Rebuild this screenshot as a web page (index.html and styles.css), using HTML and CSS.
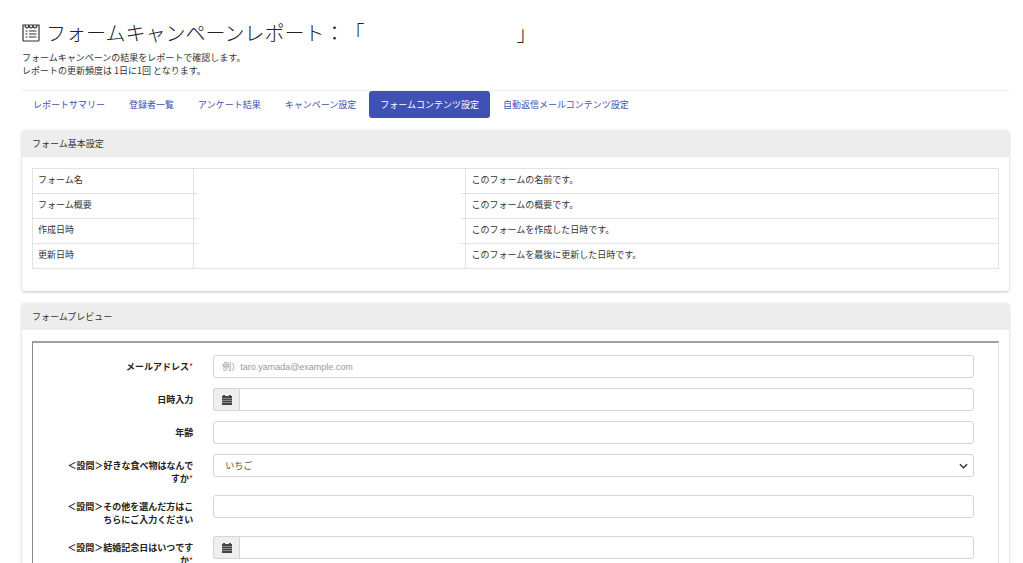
FILE: index.html
```html
<!DOCTYPE html>
<html lang="ja">
<head>
<meta charset="utf-8">
<meta name="viewport" content="width=device-width, initial-scale=1">
<title>フォームキャンペーンレポート</title>
<link rel="stylesheet" href="styles.css">
</head>
<body>
<main class="page">
  <header class="page-header">
    <h1 class="page-title">
      <svg class="title-icon" viewBox="0 0 18 18" aria-hidden="true">
        <path d="M1 1h16v15q0 1-1 1H2q-1 0-1-1z"/>
        <path d="M3 1q.3 3 2 3T7 1q.3 3 2 3T11 1q.3 3 2 3T15 1"/>
        <path d="M3.500 7h2M3.500 10h2M3.500 13h2M7 7h7.500M7 10h7.500M7 13h7.500"/>
      </svg>
      <span>フォームキャンペーンレポート：「<span class="title-name"></span>」</span>
    </h1>
    <p class="lead">フォームキャンペーンの結果をレポートで確認します。<br>レポートの更新頻度は 1日に1回 となります。</p>
  </header>

  <nav class="tabs">
    <a class="tab" href="#">レポートサマリー</a>
    <a class="tab" href="#">登録者一覧</a>
    <a class="tab" href="#">アンケート結果</a>
    <a class="tab" href="#">キャンペーン設定</a>
    <a class="tab tab-active" href="#" aria-current="page">フォームコンテンツ設定</a>
    <a class="tab" href="#">自動返信メールコンテンツ設定</a>
  </nav>

  <section class="card">
    <h2 class="card-title">フォーム基本設定</h2>
    <div class="card-body card-body-settings">
      <table class="settings">
        <colgroup><col class="col-name"><col class="col-value"><col></colgroup>
        <tbody>
          <tr><th scope="row">フォーム名</th><td class="value"></td><td>このフォームの名前です。</td></tr>
          <tr><th scope="row">フォーム概要</th><td class="value"></td><td>このフォームの概要です。</td></tr>
          <tr><th scope="row">作成日時</th><td class="value"></td><td>このフォームを作成した日時です。</td></tr>
          <tr><th scope="row">更新日時</th><td class="value"></td><td>このフォームを最後に更新した日時です。</td></tr>
        </tbody>
      </table>
    </div>
  </section>

  <section class="card">
    <h2 class="card-title">フォームプレビュー</h2>
    <div class="card-body">
      <form class="preview">
        <div class="field">
          <label class="label" for="mail">メールアドレス<span class="required">*</span></label>
          <input class="control" id="mail" type="email" placeholder="例）taro.yamada@example.com">
        </div>
        <div class="field">
          <label class="label" for="date">日時入力</label>
          <div class="group">
            <span class="addon"><svg class="calendar" viewBox="0 0 10 10" aria-hidden="true"><path class="calendar-shade" d="M0 3h10v7H0z"/><path d="M0 1h1V0h2v1h4V0h2v1h1v2H0zM0 4h10v1H0zM0 6h10v1H0zM0 8h10v2H0z"/></svg></span>
            <input class="control" id="date" type="text">
          </div>
        </div>
        <div class="field">
          <label class="label" for="age">年齢</label>
          <input class="control" id="age" type="text">
        </div>
        <div class="field">
          <label class="label" for="food">＜設問＞好きな食べ物はなんですか<span class="required">*</span></label>
          <select class="control select" id="food"><option>いちご</option></select>
        </div>
        <div class="field">
          <label class="label" for="other">＜設問＞その他を選んだ方はこちらにご入力ください</label>
          <input class="control" id="other" type="text">
        </div>
        <div class="field">
          <label class="label" for="wedding">＜設問＞結婚記念日はいつですか<span class="required">*</span></label>
          <div class="group">
            <span class="addon"><svg class="calendar" viewBox="0 0 10 10" aria-hidden="true"><path class="calendar-shade" d="M0 3h10v7H0z"/><path d="M0 1h1V0h2v1h4V0h2v1h1v2H0zM0 4h10v1H0zM0 6h10v1H0zM0 8h10v2H0z"/></svg></span>
            <input class="control" id="wedding" type="text">
          </div>
        </div>
      </form>
    </div>
  </section>
</main>
</body>
</html>
```
FILE: styles.css
```css
* {
  box-sizing: border-box;
}

body {
  margin: 0;
  background: #fff;
  color: #333;
  font-family: "Noto Sans CJK JP", sans-serif;
  font-size: 9px;
  line-height: 13px;
  text-spacing-trim: space-all;
}

html {
  scrollbar-width: none;
}

.page {
  padding: 20px 14px 20px 22px;
}

.page-header {
  padding-bottom: 13px;
  border-bottom: 1px solid #f0f0f0;
}

.page-title {
  display: flex;
  align-items: center;
  gap: 6px;
  margin: 0 0 6px;
  font-size: 20px;
  font-weight: 300;
  line-height: 25px;
  color: #222;
}

.title-icon {
  width: 18px;
  height: 18px;
  fill: none;
  stroke: #333;
  stroke-width: 1.2;
}

.title-name {
  display: inline-block;
  width: 152px;
}

.lead {
  margin: 0;
}

.tabs {
  display: flex;
  flex-wrap: wrap;
  gap: 2px;
  margin-bottom: 12px;
}

.tab {
  padding: 7px 11px;
  border-radius: 3px;
  color: #3f51b5;
  text-decoration: none;
}

.tab-active {
  background: #3f51b5;
  color: #fff;
}

.card {
  margin-bottom: 12px;
  border-radius: 3px;
  background: #fff;
  box-shadow: 0 1px 3px rgba(0, 0, 0, 0.25);
}

.card-title {
  margin: 0;
  padding: 7px 10px;
  border-radius: 3px 3px 0 0;
  background: #ededed;
  font-size: 9px;
  font-weight: 400;
}

.card-body {
  padding: 11px 10px;
}

.card-body-settings {
  padding-bottom: 22px;
}

.settings {
  width: 100%;
  table-layout: fixed;
  border: 1px solid #e2e2e2;
  border-collapse: collapse;
}

.col-name {
  width: 16.67%;
}

.col-value {
  width: 28.2%;
}

.settings th,
.settings td {
  height: 25px;
  padding: 4px 5px 7px;
  border: 1px solid #e2e2e2;
  font-weight: 400;
  text-align: left;
}

.settings tr > .value {
  border-top: 0;
  border-bottom: 0;
}

.settings tr:not(:last-child) > .value {
  background:
    linear-gradient(#e2e2e2, #e2e2e2) left bottom / 4px 1px no-repeat,
    linear-gradient(#e2e2e2, #e2e2e2) right bottom / 4px 1px no-repeat;
}

.preview {
  padding: 12px 24px 12px 8px;
  border: 1px solid #e2e2e2;
  border-top: 2px solid #a0a0a0;
  border-left: 1px solid #888;
}

.field {
  display: grid;
  grid-template-columns: 1fr 5fr;
  gap: 20px;
  align-items: start;
  margin-bottom: 10px;
}

.label {
  padding: 5px 0 0 22px;
  color: #222;
  font-weight: 700;
  text-align: right;
}

.required {
  color: #f00;
  font-weight: 400;
}

.control {
  width: 100%;
  min-width: 0;
  height: 23px;
  padding: 4px 8px;
  border: 1px solid #d4d4d4;
  border-radius: 3px;
  background: #fff;
  color: #555;
  font-family: "Liberation Sans", "Noto Sans CJK JP", sans-serif;
  font-size: 9px;
}

.control::placeholder {
  color: #999;
}

.select {
  appearance: none;
  padding: 0 11px;
  background: url("data:image/svg+xml,%3Csvg xmlns='http://www.w3.org/2000/svg' viewBox='0 0 10 6'%3E%3Cpath d='M1 1l4 4 4-4' fill='none' stroke='%23333' stroke-width='1.5'/%3E%3C/svg%3E") right 5px center / 9px 6px no-repeat;
}

.group {
  display: flex;
}

.group .control {
  border-radius: 0 3px 3px 0;
}

.addon {
  display: flex;
  flex: none;
  align-items: center;
  justify-content: center;
  width: 26px;
  border: 1px solid #d4d4d4;
  border-right: 0;
  border-radius: 3px 0 0 3px;
  background: #eee;
}

.calendar {
  width: 10px;
  height: 10px;
  fill: #444;
}

.calendar .calendar-shade {
  fill: #888;
}
```
